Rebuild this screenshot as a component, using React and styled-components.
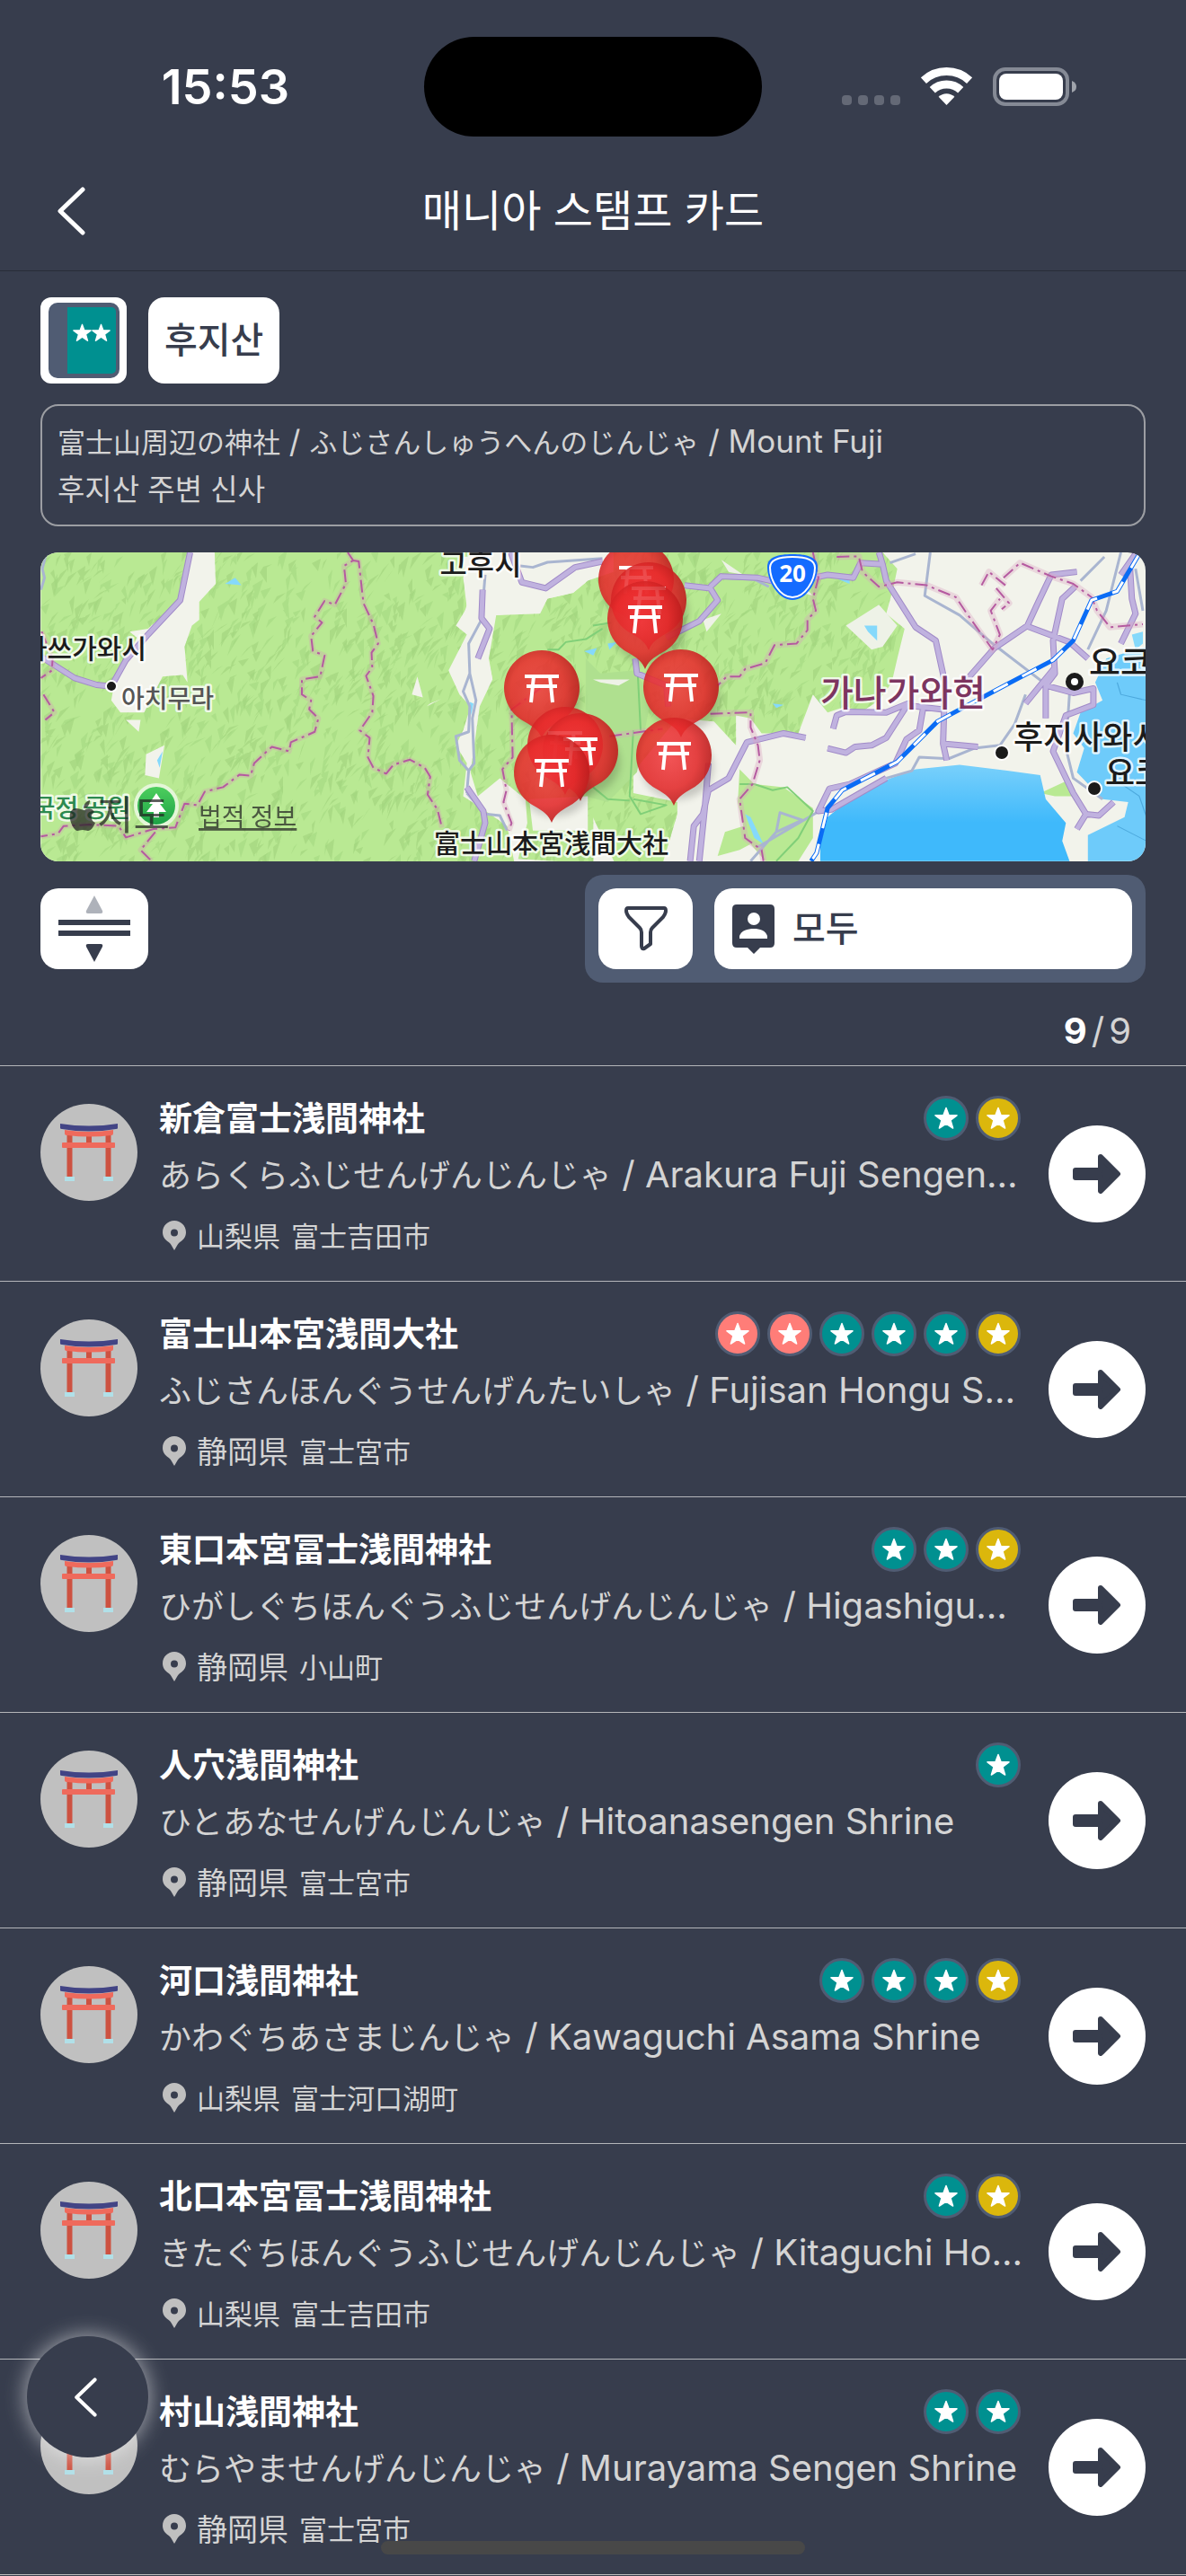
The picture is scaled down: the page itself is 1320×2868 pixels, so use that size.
import React from "react";
import styled, { createGlobalStyle } from "styled-components";

const shrines = [
  {
    name: "新倉富士浅間神社",
    kana: "あらくらふじせんげんじんじゃ",
    english: "Arakura Fuji Sengen Shrine",
    pref: "山梨県",
    city: "富士吉田市",
    stamps: ["teal", "gold"],
  },
  {
    name: "富士山本宮浅間大社",
    kana: "ふじさんほんぐうせんげんたいしゃ",
    english: "Fujisan Hongu Sengen Taisha",
    pref: "静岡県",
    city: "富士宮市",
    stamps: ["pink", "pink", "teal", "teal", "teal", "gold"],
  },
  {
    name: "東口本宮冨士浅間神社",
    kana: "ひがしぐちほんぐうふじせんげんじんじゃ",
    english: "Higashiguchi Hongu Fuji Sengen Shrine",
    pref: "静岡県",
    city: "小山町",
    stamps: ["teal", "teal", "gold"],
  },
  {
    name: "人穴浅間神社",
    kana: "ひとあなせんげんじんじゃ",
    english: "Hitoanasengen Shrine",
    pref: "静岡県",
    city: "富士宮市",
    stamps: ["teal"],
  },
  {
    name: "河口浅間神社",
    kana: "かわぐちあさまじんじゃ",
    english: "Kawaguchi Asama Shrine",
    pref: "山梨県",
    city: "富士河口湖町",
    stamps: ["teal", "teal", "teal", "gold"],
  },
  {
    name: "北口本宮冨士浅間神社",
    kana: "きたぐちほんぐうふじせんげんじんじゃ",
    english: "Kitaguchi Hongu Fuji Sengen Shrine",
    pref: "山梨県",
    city: "富士吉田市",
    stamps: ["teal", "gold"],
  },
  {
    name: "村山浅間神社",
    kana: "むらやませんげんじんじゃ",
    english: "Murayama Sengen Shrine",
    pref: "静岡県",
    city: "富士宮市",
    stamps: ["teal", "teal"],
  },
];

const stampColors = { teal: "#009090", gold: "#dbb70c", pink: "#ff7d78" };

// back to front
const pins = [
  [663, 29],
  [677, 52],
  [673, 73],
  [558, 150],
  [713, 149],
  [584, 213],
  [601, 220],
  [569, 244],
  [705, 225],
];

// seeded, so the relief looks the same on every render
const makeFacets = (count, seed) => {
  let s = seed;
  const rand = () => {
    s = (s * 16807) % 2147483647;
    return s / 2147483647;
  };
  let d = "";
  for (let i = 0; i < count; i++) {
    const x = Math.round(rand() * 960);
    const y = Math.round(rand() * 344);
    const lean = Math.round(rand() * 16 - 8);
    const h = Math.round(8 + rand() * 16);
    const w = Math.round(4 + rand() * 8);
    d += `M${x} ${y}l${w} ${-Math.round(h / 3)}l${lean - w} ${h}z`;
  }
  return d;
};

const darkFacets = makeFacets(1100, 71);
const midFacets = makeFacets(900, 4021);

const WifiIcon = () => (
  <svg width="57" height="43" viewBox="0 0 57 43" fill="none" stroke="#fff" strokeWidth="9">
    <path d="M2.9 14.6A37.5 37.5 0 0 1 54.1 14.6" />
    <path d="M12.8 25.2A23 23 0 0 1 44.2 25.2" />
    <path d="M28.5 42L19.6 32.8A13 13 0 0 1 37.4 32.8Z" fill="#fff" stroke="none" />
  </svg>
);

const BatteryIcon = () => (
  <svg width="93" height="43" viewBox="0 0 93 43">
    <rect x="2" y="2" width="81" height="39" rx="12" fill="none" stroke="#858a95" strokeWidth="4" />
    <rect x="7" y="7" width="71" height="29" rx="8" fill="#fff" />
    <path d="M88 15q5 2 5 6.500t-5 6.500z" fill="#a0a4ac" />
  </svg>
);

const ChevronIcon = ({ width, height }) => (
  <svg width={width} height={height} viewBox="0 0 32 54" fill="none" stroke="#fff" strokeWidth="5" strokeLinecap="round" strokeLinejoin="round">
    <path d="M29 3L4 27L29 51" />
  </svg>
);

const StarShape = ({ size }) => (
  <svg width={size} height={size} viewBox="0 0 26 26" fill="#fff" stroke="#fff" strokeWidth="1.500" strokeLinejoin="round">
    <path d="M13 1.500L16 9.500L25 9.800L18 15.200L20.600 24L13 19L5.400 24L8 15.200L1 9.800L10 9.500Z" />
  </svg>
);

const SortIcon = () => (
  <svg width="80" height="74" viewBox="0 0 80 74">
    <path d="M40 0L49 17Q50 20 47 20H33Q30 20 31 17Z" fill="#aeb2ba" />
    <rect y="27" width="80" height="6" fill="#373d4d" />
    <rect y="39" width="80" height="6" fill="#373d4d" />
    <path d="M40 74L49 57Q50 54 47 54H33Q30 54 31 57Z" fill="#373d4d" />
  </svg>
);

const FunnelIcon = () => (
  <svg width="48" height="50" viewBox="0 0 48 50" fill="none" stroke="#373d4d" strokeWidth="4" strokeLinejoin="round">
    <path d="M4 2H44Q46 2 46 5Q46 8 43 12L31 24Q29 26 29 29V42L22 47Q19 48 19 44V29Q19 26 17 24L5 12Q2 8 2 5Q2 2 4 2Z" />
  </svg>
);

const PersonPinIcon = () => (
  <svg width="47" height="55" viewBox="0 0 47 55">
    <path d="M5 0H42Q47 0 47 5V43Q47 48 42 48H31L24 55L17 48H5Q0 48 0 43V5Q0 0 5 0Z" fill="#373d4d" />
    <circle cx="24" cy="16" r="7" fill="#fff" />
    <path d="M8 38V35C10 29 17 27 24 27S37 29 39 35V38Z" fill="#fff" />
  </svg>
);

const ToriiIcon = () => (
  <svg width="64" height="66" viewBox="0 0 64 66">
    <g fill="#cd5241">
      <rect x="7.500" y="12" width="6" height="48" />
      <rect x="50.500" y="12" width="6" height="48" />
      <rect x="29" y="13" width="6" height="10" />
    </g>
    <path d="M5 8Q32 12 59 8V12Q59 14 57 14Q32 17 8 14Q5 14 5 12Z" fill="#ef6a5c" />
    <rect x="2" y="22" width="59" height="6" rx="1" fill="#ef6a5c" />
    <path d="M0 1Q32 6 64 1V6Q64 7 62 7Q32 12 2 7Q0 7 0 6Z" fill="#424485" />
    <path d="M5 60h11v5H5zM48 60h11v5H48z" fill="#b1e0e8" />
  </svg>
);

const PlaceIcon = () => (
  <svg width="26" height="33" viewBox="0 0 26 33">
    <path
      d="M13 0C20 0 26 5.500 26 13C26 19 22 22 18 25C16 27 15 30 13 33C11 30 10 27 8 25C4 22 0 19 0 13C0 5.500 6 0 13 0ZM13 9.500A4 4 0 1 0 13 17.500A4 4 0 1 0 13 9.500Z"
      fill="#c0c0c0"
      fillRule="evenodd"
    />
  </svg>
);

const ArrowIcon = () => (
  <svg width="54" height="44" viewBox="0 0 54 44" fill="#373d4d" stroke="#373d4d" strokeWidth="6" strokeLinejoin="round">
    <path d="M3 18H31V3L50 22L31 41V26H3Z" />
  </svg>
);

const Pin = ({ x, y }) => (
  <g transform={`translate(${x} ${y})`}>
    <ellipse cx="4" cy="14" rx="40" ry="36" fill="#000" opacity="0.180" filter="url(#soft)" />
    <path d="M0 57C-3 49-9 44-20 38A42 42 0 1 1 20 38C9 44 3 49 0 57Z" fill="url(#pinRed)" />
    <g fill="none" stroke="#fff" strokeWidth="4">
      <path d="M-19 -12H19M-17 -1H17" />
      <path d="M-9 -12L-12 17M9 -12L12 17" />
    </g>
  </g>
);

const westForest =
  "M38 45H440L420 200L330 300L280 310L300 330L240 470L230 540L255 580L320 580L370 460L425 455L438 480L430 360L450 290L470 270V210L515 150L512 45H1210L1190 130L1200 230L1170 290L1200 320L1150 440L1180 520L1210 560L1190 640L1170 690L1200 750L1190 860L1240 900L1310 960L1330 1085H38ZM1280 255L1400 250L1420 200L1490 180L1530 140L1600 120V860H1545V1085L1340 1070L1365 950L1360 870L1290 800L1230 860L1210 780L1235 560L1270 470L1260 400Z";
const eastForest =
  "M-20 45H790L830 100L820 160L800 250L850 300L830 400L815 480L780 540L730 580L690 560L640 580L600 520L560 650L460 650L430 600L390 590V690L330 610L230 600L110 780V850L230 880V920L190 1085H60L-20 880Z";
const eastRoads =
  "M200 330L290 275L340 205L320 165L250 155M320 160L350 125L450 130L520 150L640 120L710 130L730 80L790 85L780 45M790 85L800 140L880 295L935 340L960 480L955 685L965 740M955 685L1050 695M1020 470L1095 365L1185 290L1215 210L1250 120L1320 110M1315 160L1280 200L1255 340L1260 450L1235 490L1235 600M1180 290L1300 345L1350 400M1440 120L1480 50M1465 100L1470 200L1480 250L1440 350M1235 490L1310 515L1365 500V555L1290 590L1255 710L1310 850L1345 920L1320 970M1345 920L1380 925L1420 880M655 635L665 590L690 578L800 580L860 550L800 665L760 690L715 695L690 715L640 700M580 665L520 650L420 680L370 800L315 840L300 920L275 960L265 1077M315 750L305 900L290 1077M850 555L950 570M900 570L890 640L855 670L825 750L700 820L645 835L615 910L650 905L800 800M115 400L120 450L200 490L205 560M1180 550L1260 430";
const westRoads =
  "M445 45L418 205L330 320L270 405L230 493L190 488L130 465L40 395M1320 45L1350 145L1415 165L1495 95L1570 75M1243 170L1240 265L1262 300L1230 400M1200 830L1245 910L1250 950L1220 1077";
const eastBorder =
  "M665 60L725 58L735 110L780 160L830 145L910 155L990 195L1020 250L1090 370L1110 320L1085 240L1110 200M1060 155L1080 110L1125 155M1100 165L1135 215L1115 235M1120 130L1165 80L1250 125L1310 150L1360 195L1375 240L1410 295L1500 285M600 45L615 130L600 200L608 240L585 270V305L555 350L495 355L470 415L415 435L400 460L365 460L340 490M320 585L430 580V630L450 690L455 740L435 820L400 870L415 1000L460 1040L465 1077M45 660L190 635";
const westBorder =
  "M875 45L890 72L865 90L870 150L840 220L812 207L785 260L805 280L775 325L780 375L812 390L800 460L750 470V520L775 540L770 570L795 600L785 645L720 680L715 710L668 695L620 750L610 792L580 788L535 830L485 845L465 890L430 885L405 965L345 970L270 998L250 960L170 955L100 960L85 985L38 995M890 72L905 75L918 215L945 285L958 350L940 380L942 430L925 458L945 525L942 580L908 640L935 665L930 730L945 765L980 785L1000 755L1045 738L1085 765L1100 795L1093 855L1120 905L1132 965M40 310L70 400L68 440L38 465M45 520L75 580L50 605M1400 500L1322 570L1325 730L1297 770L1308 840L1300 880L1322 950L1315 975M350 980L310 1040L340 1077";
const railway =
  "M1490 50L1430 175L1360 205L1310 340L1255 405L1100 505L940 610L830 745L680 840L640 900L610 1050L595 1077";

const WEST = "translate(-15 -15) scale(0.408 0.333)";
const EAST = "translate(615 -15) scale(0.408 0.333)";

const ShrineMap = () => (
  <MapDrawing viewBox="0 0 1230 344" preserveAspectRatio="xMidYMid slice" role="img" aria-label="지도">
    <defs>
      <radialGradient id="pinRed" cx="0.450" cy="0.450" r="0.650">
        <stop offset="0" stopColor="#fb3a3e" stopOpacity="0.820" />
        <stop offset="0.550" stopColor="#e92b2c" stopOpacity="0.860" />
        <stop offset="1" stopColor="#a81616" stopOpacity="0.920" />
      </radialGradient>
      <linearGradient id="bay" x1="0" y1="0" x2="0" y2="1">
        <stop offset="0" stopColor="#79d0fb" />
        <stop offset="0.600" stopColor="#3fb9fb" />
      </linearGradient>
      <linearGradient id="park" x1="0" y1="0" x2="0" y2="1">
        <stop offset="0" stopColor="#4fd05e" />
        <stop offset="1" stopColor="#1aa045" />
      </linearGradient>
      <clipPath id="forest">
        <path d={westForest} transform={WEST} />
        <path d={eastForest} transform={EAST} />
      </clipPath>
      <filter id="soft">
        <feGaussianBlur stdDeviation="4" />
      </filter>
    </defs>
    <rect width="1230" height="344" fill="#f2f3eb" />

    <g transform={WEST}>
      <path d={westForest} fill="#b9e993" />
    </g>
    <g transform={EAST}>
      <path d={eastForest} fill="#b9e993" />
      <path d="M400 770L440 820L520 830L600 900V1000L560 1077H470L430 1020L400 1040L340 1060L360 980L410 960L395 880ZM1220 850L1290 810L1310 860L1260 860Z" fill="#b9e993" />
      <path d="M620 1077V1020L640 930L700 870L790 810L880 770L1000 755L1130 775L1220 790L1235 870L1290 950L1280 1010L1300 1077Z" fill="url(#bay)" />
      <path d="M1510 360L1400 400L1370 480L1390 540L1330 580L1310 650L1340 700L1320 780L1390 870L1460 880L1450 930L1350 990V1077H1510Z" fill="#6ecbfa" />
      <path d="M1430 480L1440 520L1510 540M1430 810L1490 860L1510 930M1430 960L1510 1010" fill="none" stroke="#4da9dd" strokeWidth="3" />
    </g>
    <g clipPath="url(#forest)">
      <path d={darkFacets} fill="#8fc46c" opacity="0.350" />
      <path d={midFacets} fill="#a0d67d" opacity="0.500" />
    </g>
    <g transform={EAST}>
      <path d="M-20 400L20 450L110 440L160 520L120 780L40 880L-20 860Z" fill="#afe08f" />
      <path d="M350 70L410 120L370 110ZM300 270L350 250L310 310ZM690 290L780 220L830 290L790 360L760 370ZM0 470H100L70 490L20 480ZM500 130L560 140L600 190L540 170Z" fill="#eef2e7" />
      <path d="M740 290H775V340L750 310ZM670 135H700V150ZM780 160L800 190ZM490 550L520 555L500 565ZM415 920L430 930L465 1020L440 1000ZM40 350L65 345L45 370ZM1470 320L1500 310V350L1480 370Z" fill="#85d9fb" />
    </g>
    <g transform={WEST}>
      <path d="M270 605L310 605L305 645ZM325 720L375 690L360 800L322 790ZM1050 520L1065 460L1080 530ZM1090 560L1130 535L1100 550ZM1165 415L1260 410L1270 470L1180 480ZM1370 870L1530 860V975H1380Z" fill="#f2f3eb" />
      <path d="M1190 60L1340 45H1600V110L1530 140L1490 180L1420 200L1400 240L1280 255L1250 300L1180 300L1200 220Z" fill="#f2f3eb" />
      <path d="M540 150L568 130L585 155ZM1520 375L1555 365L1545 390ZM355 740L370 710L362 765ZM1208 545L1218 550L1212 590Z" fill="#85d9fb" />
    </g>

    <Roads transform={WEST}>
      <path d="M52 50L42 100L48 130L38 170M1345 90L1380 95L1420 78L1570 65M1250 120L1240 270L1205 350L1208 450L1190 510L1208 560L1205 645L1170 660L1180 740L1205 775L1200 850M1208 450L1225 540L1215 600L1220 750L1205 775M1200 850L1250 920L1290 925L1310 975" stroke="#a9b5d0" strokeWidth="3" />
      <path d={westRoads} stroke="#a18bc8" strokeWidth="7" />
      <path d={westRoads} stroke="#c0b2df" strokeWidth="5" />
      <path d={westBorder} stroke="#d59bb5" strokeWidth="6" opacity="0.300" />
      <path d={westBorder} stroke="#b55aa0" strokeWidth="2" strokeDasharray="14 5 3 5" />
      <path d="M1420 370H1450L1470 345L1525 335L1570 300" stroke="#80cf78" strokeWidth="2" />
    </Roads>
    <Roads transform={EAST}>
      <path d="M920 45L905 190L1000 255L1090 350L1250 500L1300 515L1290 700L1310 800L1390 870M810 80L880 50M1180 520L1150 620L1110 690L1040 700L970 735L890 730L870 775L800 800M1350 370L1400 240L1440 45M1395 60L1330 140M1480 100L1500 240M340 130L440 135L480 160M430 1077L500 980L510 915L570 940L500 980M610 915L450 1030" stroke="#a9b5d0" strokeWidth="3" />
      <path d="M0 290L50 280M120 400L130 640M110 640L100 860L130 920L200 890L110 870M0 830L40 870L100 875M400 820L440 820L490 840L530 830L600 910L560 1000L500 1077" stroke="#80cf78" strokeWidth="2" />
      <path d={eastRoads} stroke="#a18bc8" strokeWidth="7" />
      <path d={eastRoads} stroke="#c0b2df" strokeWidth="5" />
      <path d={eastBorder} stroke="#dba3c0" strokeWidth="7" opacity="0.350" />
      <path d={eastBorder} stroke="#b55aa0" strokeWidth="2" strokeDasharray="14 5 3 5" />
      <path d={railway} stroke="#0a6cf5" strokeWidth="5" />
      <path d={railway} stroke="#fff" strokeWidth="3" strokeDasharray="18 18" />
    </Roads>

    <path d="M837 2C853 2 865 5 865 16C865 32 853 53 837 53C821 53 809 32 809 16C809 5 821 2 837 2Z" fill="#146bff" />
    <path d="M837 5C852 5 862 8 862 17C862 31 851 50 837 50C823 50 812 31 812 17C812 8 822 5 837 5Z" fill="none" stroke="#fff" strokeWidth="2" />
    <ShieldText x="837" y="33">20</ShieldText>

    <g fill="#1b1b1b" stroke="#fff" strokeWidth="2">
      <circle cx="79" cy="149" r="6" />
      <circle cx="1070" cy="223" r="8" />
      <circle cx="1173" cy="263" r="8" />
    </g>
    <circle cx="1151" cy="144" r="7" fill="#fff" stroke="#1b1b1b" strokeWidth="6" />

    <MapLabel x="490" y="25" textAnchor="middle" $size={33}>고후시</MapLabel>
    <MapLabel x="118" y="118" textAnchor="end" $size={30}>나카쓰가와시</MapLabel>
    <MapLabel x="90" y="173" $size={28} $color="#555">아치무라</MapLabel>
    <MapLabel x="100" y="295" textAnchor="end" $size={28} $color="#2c8a4f">국정 공원</MapLabel>
    <MapLabel x="438" y="335" $size={29} $family='"Noto Sans CJK JP"'>富士山本宮浅間大社</MapLabel>
    <MapLabel x="960" y="171" textAnchor="middle" $size={40} $color="#7d3560">가나가와현</MapLabel>
    <MapLabel x="1167" y="136" $size={38}>요코하마시</MapLabel>
    <MapLabel x="1083" y="219" $size={36}>후지사와시</MapLabel>
    <MapLabel x="1185" y="259" $size={36}>요코스카시</MapLabel>

    <circle cx="129" cy="282" r="23" fill="url(#park)" stroke="#e4f6d8" strokeWidth="4" />
    <path d="M129 268L137 280H133L140 289H132V295H126V289H118L125 280H121Z" fill="#fff" />
    <g opacity="0.720">
      <path d="M49 287C52 285 57 284 60 289C55 292 56 299 61 301C59 306 56 310 53 310C51 310 50 309 47 309C44 309 43 310 41 310C36 309 29 293 35 287C39 283 44 286 49 287ZM48 285C48 280 51 277 55 276C55 281 52 285 48 285Z" fill="#222" />
      <MapCredit x="63" y="309" $size={44}>지도</MapCredit>
      <MapCredit x="176" y="305" $size={28} $underline>법적 정보</MapCredit>
    </g>

    {pins.map(([x, y]) => (
      <Pin key={`${x}-${y}`} x={x} y={y} />
    ))}
  </MapDrawing>
);

const ShrineRow = ({ shrine }) => (
  <Row>
    <Avatar>
      <ToriiIcon />
    </Avatar>
    <RowBody>
      <RowHead>
        <ShrineName lang="ja">{shrine.name}</ShrineName>
        <Stamps>
          {shrine.stamps.map((kind, i) => (
            <Stamp key={i} $kind={kind}>
              <StarShape size={26} />
            </Stamp>
          ))}
        </Stamps>
      </RowHead>
      <Reading>
        <Kana lang="ja">{shrine.kana}</Kana> / {shrine.english}
      </Reading>
      <Location lang="ja">
        <PlaceIcon />
        <Prefecture $wide={shrine.pref === "静岡県"}>{shrine.pref}</Prefecture>
        <span>{shrine.city}</span>
      </Location>
    </RowBody>
    <DetailButton type="button" aria-label={shrine.name}>
      <ArrowIcon />
    </DetailButton>
  </Row>
);

const App = () => {
  return (
    <Page>
      <GlobalStyle />
      <StatusBar>
        <Clock>15:53</Clock>
        <Island />
        <StatusIcons>
          <Signal>
            <i />
            <i />
            <i />
            <i />
          </Signal>
          <WifiIcon />
          <BatteryIcon />
        </StatusIcons>
      </StatusBar>
      <Header>
        <BackButton type="button" aria-label="뒤로">
          <ChevronIcon width={32} height={54} />
        </BackButton>
        <Title>매니아 스탬프 카드</Title>
      </Header>

      <Main>
        <Chips>
          <BookChip>
            <BookCover>
              <BookFace>
                <StarShape size={21} />
                <StarShape size={21} />
              </BookFace>
            </BookCover>
          </BookChip>
          <NameChip>후지산</NameChip>
        </Chips>
        <Description>
          <DescriptionReading>
            <DescriptionJa lang="ja">富士山周辺の神社</DescriptionJa> /{" "}
            <DescriptionJa lang="ja">ふじさんしゅうへんのじんじゃ</DescriptionJa> / Mount Fuji
          </DescriptionReading>
          <p>후지산 주변 신사</p>
        </Description>
        <ShrineMap />
        <Toolbar>
          <SortButton type="button" aria-label="정렬">
            <SortIcon />
          </SortButton>
          <FilterGroup>
            <FilterButton type="button" aria-label="필터">
              <FunnelIcon />
            </FilterButton>
            <VisitorField>
              <PersonPinIcon />
              <VisitorSelect aria-label="방문자" defaultValue="all">
                <option value="all">모두</option>
              </VisitorSelect>
            </VisitorField>
          </FilterGroup>
        </Toolbar>
        <Count>
          <b>9</b>
          <span>/</span>
          <span>9</span>
        </Count>
      </Main>

      <List>
        {shrines.map((shrine) => (
          <ShrineRow key={shrine.name} shrine={shrine} />
        ))}
      </List>

      <FloatingBack type="button" aria-label="이전">
        <ChevronIcon width={26} height={44} />
      </FloatingBack>
      <HomeIndicator />
    </Page>
  );
};

export default App;

const GlobalStyle = createGlobalStyle`
  * {
    box-sizing: border-box;
  }
  body {
    margin: 0;
    background-color: #373d4d;
  }
  p, h1, h2, ul {
    margin: 0;
    padding: 0;
  }
  svg {
    display: block;
    flex-shrink: 0;
  }
  button, select {
    font: inherit;
    color: inherit;
    border: none;
    padding: 0;
  }
`;

const Page = styled.div`
  min-height: 100vh;
  background-color: #373d4d;
  color: #fff;
  font-family: Inter, "Noto Sans CJK KR", sans-serif;
`;

const StatusBar = styled.div`
  display: grid;
  grid-template-columns: 1fr 376px 1fr;
  align-items: center;
  padding: 41px 0 16px;
`;

const Clock = styled.span`
  justify-self: end;
  margin-right: 150px;
  font-size: 54px;
  line-height: 56px;
  font-weight: 600;
`;

const Island = styled.div`
  height: 111px;
  border-radius: 56px;
  background-color: #000;
`;

const StatusIcons = styled.div`
  display: flex;
  justify-content: flex-end;
  align-items: flex-end;
  gap: 23px;
  padding-right: 122px;
`;

const Signal = styled.div`
  display: flex;
  gap: 7px;

  i {
    width: 11px;
    height: 11px;
    border-radius: 4px;
    background-color: #646976;
    margin-bottom: 1px;
  }
`;

const Header = styled.header`
  display: grid;
  grid-template-columns: 160px 1fr 160px;
  align-items: center;
  height: 134px;
  border-bottom: 1px solid #282c38;
`;

const BackButton = styled.button`
  justify-self: start;
  margin-left: 63px;
  background: none;
`;

const Title = styled.h1`
  text-align: center;
  font-size: 48px;
  line-height: 60px;
  font-weight: 400;
`;

const Main = styled.main`
  padding: 29px 45px 0;
`;

const Chips = styled.div`
  display: flex;
  gap: 24px;
`;

const BookChip = styled.div`
  display: flex;
  align-items: center;
  justify-content: center;
  width: 96px;
  height: 96px;
  border-radius: 12px;
  background-color: #fff;
`;

const BookCover = styled.div`
  width: 79px;
  height: 84px;
  padding: 5px 4px 5px 21px;
  border-radius: 10px;
  background-color: #505c73;
`;

const BookFace = styled.div`
  display: flex;
  justify-content: center;
  height: 100%;
  padding-top: 18px;
  border-radius: 0 5px 5px 0;
  background-color: #009090;
`;

const NameChip = styled.div`
  display: flex;
  align-items: center;
  padding: 0 18px;
  border-radius: 18px;
  background-color: #fff;
  color: #373d4d;
  font-size: 40px;
  line-height: 56px;
  font-weight: 500;
`;

const Description = styled.div`
  margin-top: 23px;
  padding: 12px 17px;
  border: 2px solid #9c9ea3;
  border-radius: 20px;
  color: #d4d4d4;
  font-size: 33px;
  line-height: 54px;
`;

const DescriptionReading = styled.p`
  font-size: 35px;
`;

const DescriptionJa = styled.span`
  font-family: "Noto Sans CJK JP", sans-serif;
  font-size: 31px;
  line-height: 1;
`;

const MapDrawing = styled.svg`
  width: 100%;
  height: 344px;
  margin-top: 29px;
  border-radius: 20px;
`;

const Roads = styled.g`
  fill: none;
  stroke-linejoin: round;

  path {
    vector-effect: non-scaling-stroke;
  }
`;

const MapLabel = styled.text`
  font-family: ${({ $family }) => $family || '"Noto Sans CJK KR"'}, sans-serif;
  font-size: ${({ $size }) => $size}px;
  font-weight: 500;
  fill: ${({ $color }) => $color || "#1b1b1b"};
  stroke: rgba(255, 255, 255, 0.8);
  stroke-width: 5px;
  stroke-linejoin: round;
  paint-order: stroke;
`;

const MapCredit = styled.text`
  font-family: "Noto Sans CJK KR", sans-serif;
  font-size: ${({ $size }) => $size}px;
  fill: #222;
  text-decoration: ${({ $underline }) => ($underline ? "underline" : "none")};
`;

const ShieldText = styled.text`
  font-family: "Noto Sans", sans-serif;
  font-size: 26px;
  font-weight: 700;
  text-anchor: middle;
  fill: #fff;
`;

const Toolbar = styled.div`
  display: flex;
  align-items: center;
  justify-content: space-between;
  margin-top: 15px;
`;

const SortButton = styled.button`
  display: flex;
  align-items: center;
  justify-content: center;
  width: 120px;
  height: 90px;
  border-radius: 20px;
  background-color: #fff;
`;

const FilterGroup = styled.div`
  display: flex;
  gap: 24px;
  padding: 15px;
  border-radius: 20px;
  background-color: #505c73;
`;

const FilterButton = styled.button`
  display: flex;
  align-items: center;
  justify-content: center;
  width: 105px;
  height: 90px;
  border-radius: 20px;
  background-color: #fff;
`;

const VisitorField = styled.label`
  display: flex;
  align-items: center;
  gap: 20px;
  width: 465px;
  padding: 0 20px;
  border-radius: 20px;
  background-color: #fff;
  color: #373d4d;
`;

const VisitorSelect = styled.select`
  flex: 1;
  appearance: none;
  background: none;
  font-size: 40px;
  font-weight: 500;
  line-height: 60px;
`;

const Count = styled.p`
  display: flex;
  justify-content: flex-end;
  gap: 5px;
  padding: 28px 16px 12px;
  color: #d4d4d4;
  font-size: 40px;
  line-height: 52px;

  b {
    color: #fff;
  }
`;

const List = styled.ul`
  list-style: none;
  border-bottom: 1px solid #c0c0c0;
`;

const Row = styled.li`
  display: grid;
  grid-template-columns: 108px minmax(0, 1fr) 108px;
  gap: 24px;
  height: 240px;
  padding: 0 45px;
  border-top: 1px solid #b4b6ba;
`;

const Avatar = styled.div`
  display: flex;
  align-items: center;
  justify-content: center;
  height: 108px;
  margin-top: 42px;
  border-radius: 50%;
  background-color: #c0c0c0;
`;

const RowBody = styled.div`
  padding-top: 33px;
`;

const RowHead = styled.div`
  display: flex;
  align-items: center;
  justify-content: space-between;
  height: 50px;
  padding-right: 7px;
`;

const ShrineName = styled.h2`
  font-family: "Noto Sans CJK JP", sans-serif;
  font-size: 37px;
  line-height: 46px;
  padding-bottom: 4px;
  font-weight: 700;
`;

const Stamps = styled.div`
  display: flex;
  gap: 8px;
`;

const Stamp = styled.span`
  display: flex;
  align-items: center;
  justify-content: center;
  width: 50px;
  height: 50px;
  border: 3px solid #505c73;
  border-radius: 50%;
  background-color: ${({ $kind }) => stampColors[$kind]};
`;

const Reading = styled.p`
  overflow: hidden;
  white-space: nowrap;
  text-overflow: ellipsis;
  color: #d4d4d4;
  font-size: 40px;
  line-height: 76px;
`;

const Kana = styled.span`
  font-family: "Noto Sans CJK JP", sans-serif;
  font-size: 36px;
  line-height: 1;
`;

const Location = styled.p`
  display: flex;
  align-items: center;
  margin-top: 6px;
  padding-left: 4px;
  color: #d4d4d4;
  font-family: "Noto Sans CJK JP", sans-serif;
  font-size: 31px;
  line-height: 46px;
`;

const Prefecture = styled.span`
  margin: 0 12px;
  font-size: ${({ $wide }) => ($wide ? 34 : 31)}px;
`;

const DetailButton = styled.button`
  display: flex;
  align-items: center;
  justify-content: center;
  align-self: center;
  height: 108px;
  border-radius: 50%;
  background-color: #fff;
`;

const FloatingBack = styled.button`
  position: fixed;
  left: 30px;
  bottom: 132px;
  display: flex;
  align-items: center;
  justify-content: center;
  width: 135px;
  height: 135px;
  padding-right: 6px;
  border-radius: 50%;
  background-color: #373d4d;
  box-shadow: 0 0 24px rgba(255, 255, 255, 0.6);
`;

const HomeIndicator = styled.div`
  position: fixed;
  left: 50%;
  bottom: 24px;
  width: 472px;
  height: 15px;
  margin-left: -236px;
  border-radius: 8px;
  background-color: #484848;
`;
